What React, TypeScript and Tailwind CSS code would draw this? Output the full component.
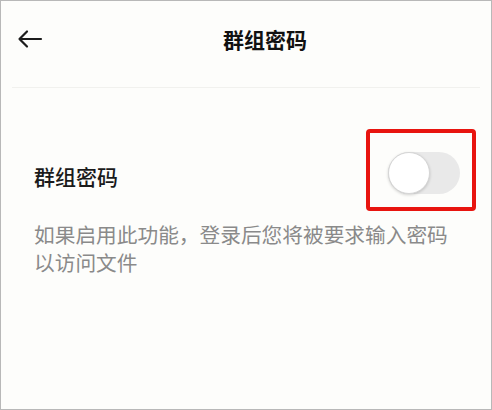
export default function App() {
  return (
    <div
      className="w-[492px] h-[410px] border border-[#b8b8b8] bg-[#fdfdfb] overflow-hidden"
      style={{ fontFamily: '"Noto Sans CJK SC", "Noto Sans", sans-serif' }}
    >
      <header className="h-[87px] mx-[11px] border-b border-[#f1f1ee] flex items-start">
        <div className="h-[76px] flex items-center w-full">
          <svg
            width="26"
            height="20"
            viewBox="0 0 26 20"
            className="ml-[5px] text-[#1c1c1c]"
            fill="none"
            stroke="currentColor"
            strokeWidth="2.2"
            strokeLinecap="round"
            strokeLinejoin="round"
          >
            <path d="M24 10H2.5M10 2.5L2.5 10L10 17.5" />
          </svg>
          <h1 className="ml-[180px] text-[21px] leading-[30px] font-bold text-[#111]">
            群组密码
          </h1>
        </div>
      </header>

      <section className="pl-[33px] pr-[15px]">
        <div className="mt-[41px] flex items-start justify-between">
          <span className="mt-[32px] text-[21px] leading-[30px] font-medium text-[#1a1a1a]">
            群组密码
          </span>
          <div className="w-[110px] h-[82px] border-4 border-[#e8140f] rounded-[4px] pl-[18px] pt-[19px]">
            <button className="relative w-[72px] h-[42px] rounded-full bg-[#e9e9e9]">
              <span className="absolute left-0 top-0 w-[42px] h-[42px] rounded-full bg-white border border-[#d6d6d6] shadow-[0_1px_3px_rgba(0,0,0,0.18)]" />
            </button>
          </div>
        </div>
        <p className="mt-[9px] w-[425px] text-[20.7px] leading-[28px] text-[#8a8a8a]">
          如果启用此功能，登录后您将被要求输入密码以访问文件
        </p>
      </section>
    </div>
  );
}
